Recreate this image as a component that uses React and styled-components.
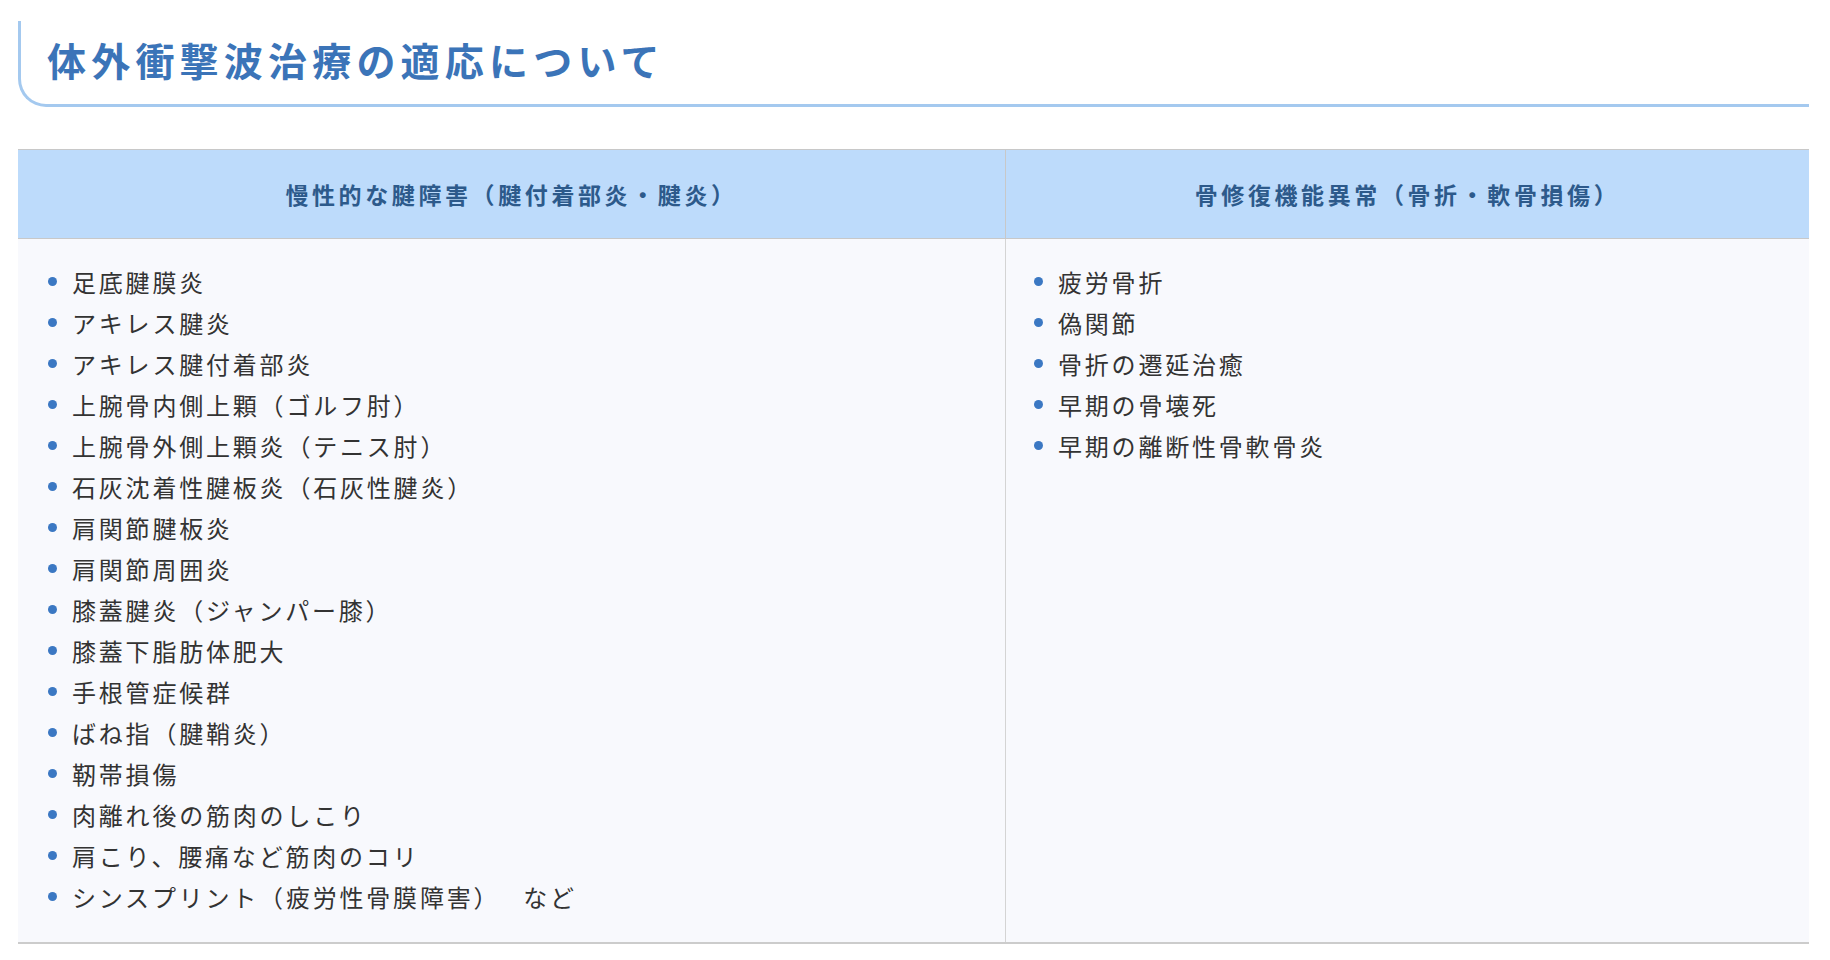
import React from "react";
import styled, { createGlobalStyle } from "styled-components";

const GlobalStyle = createGlobalStyle`
  html, body {
    margin: 0;
    padding: 0;
    background: #ffffff;
  }
  body {
    font-family: "Noto Sans CJK JP", "Noto Sans", sans-serif;
    color: #333333;
  }
`;

const columns = [
  {
    title: "慢性的な腱障害（腱付着部炎・腱炎）",
    items: [
      "足底腱膜炎",
      "アキレス腱炎",
      "アキレス腱付着部炎",
      "上腕骨内側上顆（ゴルフ肘）",
      "上腕骨外側上顆炎（テニス肘）",
      "石灰沈着性腱板炎（石灰性腱炎）",
      "肩関節腱板炎",
      "肩関節周囲炎",
      "膝蓋腱炎（ジャンパー膝）",
      "膝蓋下脂肪体肥大",
      "手根管症候群",
      "ばね指（腱鞘炎）",
      "靭帯損傷",
      "肉離れ後の筋肉のしこり",
      "肩こり、腰痛など筋肉のコリ",
      "シンスプリント（疲労性骨膜障害）　 など",
    ],
  },
  {
    title: "骨修復機能異常（骨折・軟骨損傷）",
    items: [
      "疲労骨折",
      "偽関節",
      "骨折の遷延治癒",
      "早期の骨壊死",
      "早期の離断性骨軟骨炎",
    ],
  },
];

const App = () => {
  return (
    <Page>
      <GlobalStyle />
      <Heading>
        <h2>体外衝撃波治療の適応について</h2>
      </Heading>
      <Table>
        {columns.map((col, i) => (
          <HeadCell key={col.title} first={i === 0}>
            {col.title}
          </HeadCell>
        ))}
        {columns.map((col, i) => (
          <BodyCell key={col.title} first={i === 0}>
            <ItemList>
              {col.items.map((item) => (
                <Item key={item}>{item}</Item>
              ))}
            </ItemList>
          </BodyCell>
        ))}
      </Table>
    </Page>
  );
};

export default App;

const Page = styled.div`
  padding: 21px 21px 0 18px;
`;

const Heading = styled.div`
  border-left: 3px solid #a4c9ef;
  border-bottom: 3px solid #a4c9ef;
  border-bottom-left-radius: 28px;
  padding: 14px 0 21px 26px;

  h2 {
    margin: 0;
    font-size: 39px;
    line-height: 48px;
    font-weight: 700;
    letter-spacing: 5.2px;
    color: #3b74b8;
  }
`;

const Table = styled.div`
  display: grid;
  grid-template-columns: 987px 1fr;
  margin-top: 42px;
  border-bottom: 2px solid #cccccc;
`;

const HeadCell = styled.div`
  display: flex;
  align-items: center;
  justify-content: center;
  height: 88px;
  background: #bddbfb;
  border-top: 1px solid #c8c8c8;
  border-bottom: 1px solid #c8c8c8;
  border-left: ${(p) => (p.first ? "none" : "1px solid #c8c8c8")};
  font-size: 23px;
  font-weight: 700;
  letter-spacing: 3.6px;
  color: #2d5a8b;
`;

const BodyCell = styled.div`
  background: #f8f9fd;
  border-left: ${(p) => (p.first ? "none" : "1px solid #d4d4d4")};
  padding: 22px 0 25px ${(p) => (p.first ? "30px" : "28px")};
`;

const ItemList = styled.ul`
  list-style: none;
  margin: 0;
  padding: 0;
`;

const Item = styled.li`
  display: flex;
  align-items: center;
  gap: 15px;
  font-size: 24px;
  line-height: 41px;
  letter-spacing: 2.8px;
  color: #333333;
  white-space: pre;

  &::before {
    content: "";
    flex: none;
    width: 9px;
    height: 9px;
    border-radius: 50%;
    background: #3b78c3;
  }
`;
